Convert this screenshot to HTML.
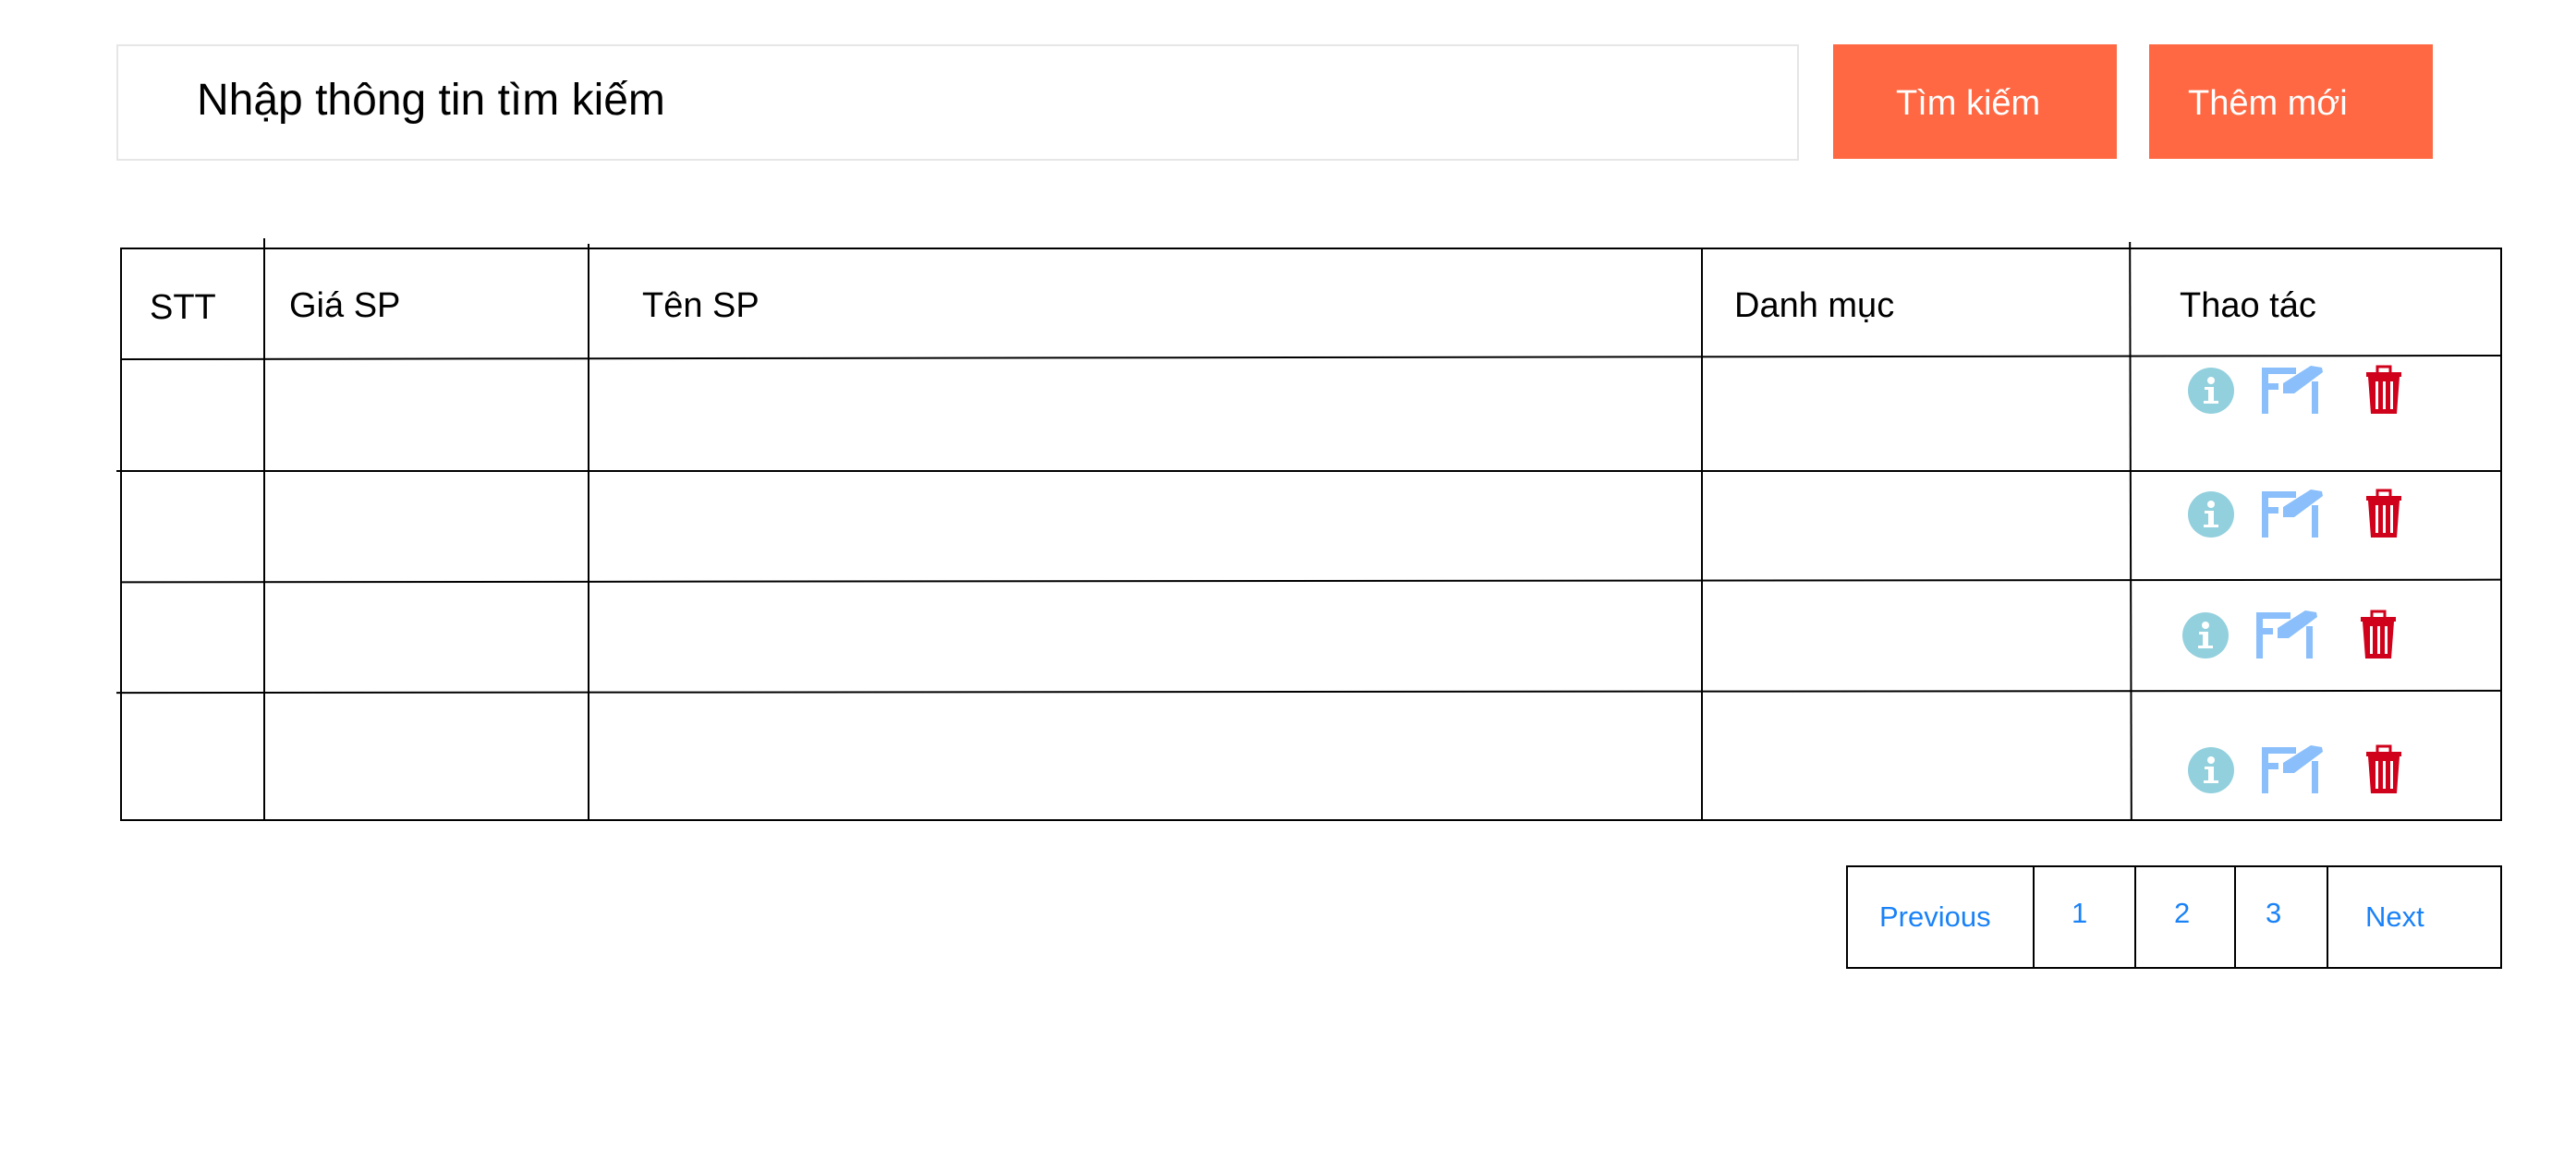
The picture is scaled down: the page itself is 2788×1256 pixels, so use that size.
<!DOCTYPE html>
<html><head><meta charset="utf-8">
<style>
body{margin:0;width:2788px;height:1256px;background:#fff;position:relative;overflow:hidden;font-family:"Liberation Sans",sans-serif;}
.a{position:absolute}
.t{position:absolute;color:#000;font-size:38px;line-height:1;white-space:nowrap}
.h{position:absolute;background:#000;height:2px}
.v{position:absolute;background:#000;width:2px}
.btn{position:absolute;background:#ff6843;color:#fff;font-size:38px;top:48px;height:124px;width:307px;line-height:128px}
.pg{position:absolute;color:#1a82f7;font-size:31px;top:977px;line-height:1}
</style></head><body>
<div class="a" style="left:126px;top:48px;width:1817px;height:122px;border:2px solid #e6e6e6"></div>
<div class="t" style="left:213px;top:85px;font-size:48px">Nhập thông tin tìm kiếm</div>
<div class="btn" style="left:1984px;"><span style="margin-left:68px">Tìm kiếm</span></div>
<div class="btn" style="left:2326px;"><span style="margin-left:42px">Thêm mới</span></div>

<div class="a" style="left:130px;top:268px;width:2574px;height:617px;border:2px solid #000"></div>
<div class="v" style="left:285px;top:258px;height:629px"></div>
<div class="v" style="left:636px;top:264px;height:623px"></div>
<div class="v" style="left:1841px;top:268px;height:619px"></div>
<div class="v" style="left:2305px;top:262px;height:625px;transform:rotate(-0.15deg)"></div>
<div class="h" style="left:130px;top:386px;width:2576px;transform:rotate(-0.09deg)"></div>
<div class="h" style="left:126px;top:509px;width:2580px"></div>
<div class="h" style="left:130px;top:628px;width:2576px;transform:rotate(-0.06deg)"></div>
<div class="h" style="left:126px;top:748px;width:2580px;transform:rotate(-0.05deg)"></div>

<div class="t" style="left:162px;top:314px">STT</div>
<div class="t" style="left:313px;top:312px">Giá SP</div>
<div class="t" style="left:695px;top:312px">Tên SP</div>
<div class="t" style="left:1877px;top:312px">Danh mục</div>
<div class="t" style="left:2359px;top:312px">Thao tác</div>

<svg class="a" style="left:0;top:0" width="2788" height="1256">
<defs>
<g id="ic">
<circle cx="0" cy="0" r="25" fill="#93d0dd"/>
<circle cx="0" cy="-11" r="4" fill="#fff"/>
<rect x="-3" y="-4" width="6" height="17" fill="#fff"/>
<rect x="-8" y="11" width="16" height="3" fill="#fff"/>
<rect x="-7" y="-4" width="7" height="3" fill="#fff"/>
<g fill="#8abffb">
<rect x="55" y="-25" width="7" height="50"/>
<rect x="55" y="-25" width="37" height="7"/>
<rect x="55" y="-8" width="18" height="7"/>
<rect x="109" y="-10" width="7" height="35"/>
<polygon points="78,-8 108,-27 120,-25 121,-20 90,3 78,3"/>
</g>
<g fill="#d0021b">
<rect x="168" y="-20" width="38" height="5"/>
<rect x="180" y="-26" width="14" height="8" fill="none" stroke="#d0021b" stroke-width="3"/>
<polygon points="170,-15 204,-15 201,25 173,25"/>
</g>
<g fill="#fff">
<rect x="178" y="-10" width="3" height="30"/>
<rect x="186" y="-10" width="3" height="30"/>
<rect x="194" y="-10" width="3" height="30"/>
</g>
</g>
</defs>
<use href="#ic" x="2393" y="423"/>
<use href="#ic" x="2393" y="557"/>
<use href="#ic" x="2387" y="688"/>
<use href="#ic" x="2393" y="834"/>
</svg>

<div class="a" style="left:1998px;top:937px;width:706px;height:108px;border:2px solid #000;box-sizing:content-box"></div>
<div class="v" style="left:2200px;top:937px;height:110px"></div>
<div class="v" style="left:2310px;top:937px;height:110px"></div>
<div class="v" style="left:2418px;top:937px;height:110px"></div>
<div class="v" style="left:2518px;top:937px;height:110px"></div>
<div class="pg" style="left:2034px">Previous</div>
<div class="pg" style="left:2242px;top:973px">1</div>
<div class="pg" style="left:2353px;top:973px">2</div>
<div class="pg" style="left:2452px;top:973px">3</div>
<div class="pg" style="left:2560px">Next</div>
</body></html>
